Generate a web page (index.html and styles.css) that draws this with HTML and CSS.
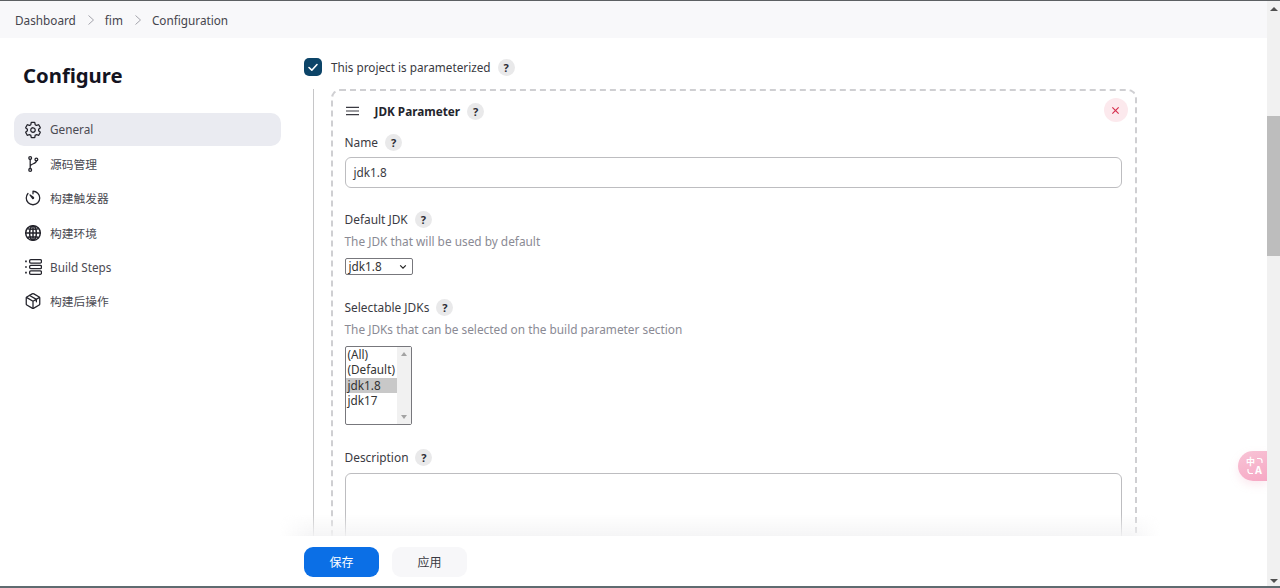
FILE: index.html
```html
<!DOCTYPE html>
<html lang="en">
<head>
<meta charset="utf-8">
<title>fim Config</title>
<link rel="stylesheet" href="styles.css">
</head>
<body>
<div class="edge-top"></div>
<div class="window">
  <div class="page">
    <nav class="crumbs">
      <span>Dashboard</span>
      <svg class="chev" viewBox="0 0 8 12"><path d="M1.5 1.5 6.5 6l-5 4.500"/></svg>
      <span>fim</span>
      <svg class="chev" viewBox="0 0 8 12"><path d="M1.5 1.5 6.500 6l-5 4.500"/></svg>
      <span>Configuration</span>
    </nav>
    <div class="main">
      <aside class="side">
        <h1 class="title">Configure</h1>
        <ul class="menu">
          <li class="item active">
            <svg class="ico" viewBox="0 0 512 512"><path d="M262.29 192.31a64 64 0 1057.4 57.4 64.13 64.13 0 00-57.4-57.4zM416.39 256a154.34 154.34 0 01-1.53 20.79l45.21 35.46a10.81 10.81 0 012.45 13.75l-42.77 74a10.81 10.81 0 01-13.14 4.59l-44.9-18.08a16.11 16.11 0 00-15.17 1.75A164.48 164.48 0 01325 400.8a15.94 15.94 0 00-8.82 12.14l-6.73 47.89a11.08 11.08 0 01-10.68 9.17h-85.54a11.11 11.11 0 01-10.69-8.87l-6.72-47.82a16.07 16.07 0 00-9-12.22 155.3 155.3 0 01-21.46-12.57 16 16 0 00-15.11-1.71l-44.89 18.07a10.81 10.81 0 01-13.14-4.58l-42.77-74a10.8 10.8 0 012.45-13.75l38.21-30a16.05 16.05 0 006.07-14.08c-.36-4.17-.58-8.33-.58-12.5s.21-8.27.58-12.35a16 16 0 00-6.07-13.94l-38.19-30A10.81 10.81 0 0149.48 186l42.77-74a10.81 10.81 0 0113.14-4.59l44.9 18.08a16.11 16.11 0 0015.17-1.75A164.48 164.48 0 01187 111.2a15.94 15.94 0 008.82-12.14l6.73-47.89A11.08 11.08 0 01213.23 42h85.54a11.11 11.11 0 0110.69 8.87l6.72 47.82a16.07 16.07 0 009 12.22 155.3 155.3 0 0121.46 12.57 16 16 0 0015.11 1.71l44.89-18.07a10.81 10.81 0 0113.14 4.58l42.77 74a10.8 10.8 0 01-2.45 13.75l-38.21 30a16.05 16.05 0 00-6.07 14.08c.33 4.14.55 8.3.55 12.47z"/></svg>
            <span>General</span>
          </li>
          <li class="item">
            <svg class="ico" viewBox="0 0 512 512"><circle cx="176" cy="88" r="40"/><circle cx="176" cy="424" r="40"/><circle cx="352" cy="128" r="40"/><path d="M176 128v256M352 168c0 88-176 72-176 160"/></svg>
            <span>源码管理</span>
          </li>
          <li class="item">
            <svg class="ico" viewBox="0 0 512 512"><path d="M112.91 128A191.85 191.85 0 0064 256c0 106 86 192 192 192s192-86 192-192A192 192 0 00256 64v74.450"/><path d="M268 268a24 24 0 01-28-6l-70-92 94 66a24 24 0 014 32z"/></svg>
            <span>构建触发器</span>
          </li>
          <li class="item">
            <svg class="ico heavy" viewBox="0 0 512 512"><circle cx="256" cy="256" r="208"/><ellipse cx="256" cy="256" rx="96" ry="208"/><path d="M256 48v416M48 256h416M96 128c44 30 276 30 320 0M96 384c44-30 276-30 320 0"/></svg>
            <span>构建环境</span>
          </li>
          <li class="item">
            <svg class="ico" viewBox="0 0 512 512"><rect x="160" y="48" width="336" height="96" rx="32"/><rect x="160" y="208" width="336" height="96" rx="32"/><rect x="160" y="368" width="336" height="96" rx="32"/><path class="dots" d="M32 70h48v48H32zM32 232h48v48H32zM32 392h48v48H32z"/></svg>
            <span>Build Steps</span>
          </li>
          <li class="item">
            <svg class="ico" viewBox="0 0 512 512"><path d="M448 341.370V170.610A32 32 0 00432.110 143l-152-88.460a47.940 47.940 0 00-48.240 0L79.890 143A32 32 0 0064 170.610v170.760A32 32 0 0079.890 369l152 88.460a48 48 0 0048.240 0l152-88.460A32 32 0 00448 341.370z"/><path d="M69 154l187 110 187-110M256 464V264M160 98l192 112v70"/></svg>
            <span>构建后操作</span>
          </li>
        </ul>
      </aside>
      <section class="content">
        <div class="check-row">
          <span class="checkbox"><svg viewBox="0 0 18 18"><path d="M5 9.500l2.800 2.700L13 6.500"/></svg></span>
          <span class="text">This project is parameterized</span>
          <span class="help">?</span>
        </div>
        <div class="tree">
          <div class="card">
            <div class="card-head">
              <svg class="handle" viewBox="0 0 14 10"><path d="M0 1h14M0 5h14M0 9h14"/></svg>
              <strong class="card-title">JDK Parameter</strong>
              <span class="help">?</span>
              <span class="close"><svg viewBox="0 0 10 10"><path d="M1.500 1.500l7 7M8.500 1.500l-7 7"/></svg></span>
            </div>
            <div class="field name-field">
              <div class="label"><span>Name</span><span class="help">?</span></div>
              <div class="input">jdk1.8</div>
            </div>
            <div class="field">
              <div class="label"><span>Default JDK</span><span class="help">?</span></div>
              <div class="desc">The JDK that will be used by default</div>
              <div class="select"><span>jdk1.8</span><svg viewBox="0 0 10 6"><path d="M1.500 1l3.500 3.500L8.500 1"/></svg></div>
            </div>
            <div class="field wide">
              <div class="label"><span>Selectable JDKs</span><span class="help">?</span></div>
              <div class="desc">The JDKs that can be selected on the build parameter section</div>
              <div class="listbox">
                <div class="options">
                  <div class="opt">(All)</div>
                  <div class="opt">(Default)</div>
                  <div class="opt selected">jdk1.8</div>
                  <div class="opt">jdk17</div>
                </div>
                <div class="list-bar"><i class="tri up"></i><i class="tri down"></i></div>
              </div>
            </div>
            <div class="field wide">
              <div class="label"><span>Description</span><span class="help">?</span></div>
              <div class="textarea"></div>
            </div>
          </div>
        </div>
      </section>
    </div>
    <div class="footer">
      <button class="btn primary">保存</button>
      <button class="btn plain">应用</button>
    </div>
    <div class="translate">
      <span class="zh">中</span><span class="en">A</span>
      <svg viewBox="0 0 20 20"><path d="M12 2.500h2.500a2.500 2.500 0 012.500 2.500v2M8 17.500H5.500A2.500 2.500 0 013 15v-2"/></svg>
    </div>
  </div>
  <div class="scrollbar">
    <i class="tri up"></i>
    <div class="thumb"></div>
    <i class="tri down"></i>
  </div>
</div>
<div class="edge-bottom"></div>
</body>
</html>
```
FILE: styles.css
```css
* { box-sizing: border-box; }
html, body { margin: 0; height: 588px; overflow: hidden; }
body {
  display: flex;
  flex-direction: column;
  background: #fff;
  color: #3a3a42;
  font-family: "Noto Sans", "Noto Sans CJK SC", sans-serif;
  font-size: 11.750px;
}
.edge-top { height: 1px; background: #5d6063; flex: none; }
.edge-bottom { height: 2px; background: #5f6b70; flex: none; }
.window { flex: 1; display: flex; min-height: 0; }
.page { flex: 1; position: relative; overflow: hidden; min-width: 0; }

.crumbs {
  height: 37px;
  background: #f8f8fa;
  display: flex;
  align-items: center;
  padding: 1px 0 0 15px;
  color: #45454d;
}
.chev { width: 8px; height: 12px; margin: 0 10px 0 11px; fill: none; stroke: #a4a4ac; stroke-width: 1; }

.main { display: flex; }
.side { width: 304px; flex: none; padding-left: 14px; }
.title {
  margin: 23px 0 24px 9px;
  font-size: 20.300px;
  line-height: 28px;
  font-weight: 700;
  color: #14141f;
}
.menu { list-style: none; margin: 0; padding: 0; width: 267px; display: flex; flex-direction: column; gap: 1.400px; }
.item { height: 33px; border-radius: 10px; display: flex; align-items: center; padding-left: 10px; gap: 8px; color: #4a4a52; }
.item span { position: relative; top: -.5px; }
.item.active { background: #eaebf1; }
.ico { width: 18px; height: 18px; flex: none; fill: none; stroke: #24242c; stroke-width: 36; stroke-linecap: round; stroke-linejoin: round; }
.ico.heavy { stroke-width: 42; }
.ico .dots { fill: #24242c; stroke-width: 0; }

.content { flex: 1; min-width: 0; padding-top: 20px; }
.check-row { display: flex; align-items: center; height: 18px; }
.checkbox { width: 18px; height: 18px; border-radius: 5px; background: #0c4468; flex: none; margin-right: 9px; }
.checkbox svg { display: block; fill: none; stroke: #fff; stroke-width: 1.600; stroke-linecap: round; stroke-linejoin: round; }
.help {
  width: 17px; height: 17px; border-radius: 50%;
  background: #e9e9ea; color: #2c2c34;
  font-size: 11px; font-weight: 700; line-height: 17px; text-align: center;
  margin-left: 7px; flex: none;
}

.tree { margin: 13px 0 0 9px; border-left: 1.500px solid #c6c6c8; padding-left: 16.500px; height: 470px; }
.card {
  width: 806px; height: 600px;
  border: 2px dashed #cfcfd2;
  border-radius: 9px;
  padding: 8px 13px 0 12px;
  margin-top: 1px;
}
.card-head { display: flex; align-items: center; height: 24px; }
.handle { width: 13px; height: 10px; margin: 0 16px 0 1px; fill: none; stroke: #3a3a42; stroke-width: 1.300; flex: none; }
.card-title { color: #24242c; font-weight: 700; }
.close {
  width: 24px; height: 24px; border-radius: 50%;
  background: #fce9ed;
  margin-left: auto; margin-right: -6px;
  margin-top: -2px;
  display: flex; align-items: center; justify-content: center;
}
.close svg { width: 9px; height: 9px; fill: none; stroke: #d6304f; stroke-width: 1.300; }

.field { margin-top: 22px; }
.field.wide { margin-top: 23px; }
.name-field { margin-top: 10px; }
.label { height: 18px; display: flex; align-items: center; font-size: 11.900px; }
.input {
  height: 31px; margin-top: 6px;
  border: 1.500px solid #bdbdc0; border-radius: 6px;
  padding-left: 8px; line-height: 29px; color: #3a3a42;
}
.desc { margin-top: 4px; height: 18px; line-height: 18px; color: #8a8a94; font-size: 11.850px; }
.select {
  margin-top: 8px; width: 68px; height: 17px;
  border: 1px solid #77777c; border-radius: 2px;
  display: flex; align-items: center; justify-content: space-between;
  padding: 0 5px 0 3px; line-height: 15px; color: #333;
}
.select svg { width: 8px; height: 6px; fill: none; stroke: #222; stroke-width: 1.500; }
.listbox {
  margin-top: 8px; width: 67px; height: 79px;
  border: 1px solid #77777c; border-radius: 2px;
  display: flex; color: #333;
}
.options { width: 51px; }
.opt { height: 15.400px; line-height: 15.400px; padding-left: 2px; white-space: nowrap; }
.opt.selected { background: #c8c8c8; }
.list-bar { flex: 1; background: #f1f1f1; display: flex; flex-direction: column; justify-content: space-between; align-items: center; padding: 5px 0; }
.tri { display: block; width: 0; height: 0; border-left: 4px solid transparent; border-right: 4px solid transparent; }
.tri.up { border-bottom: 4px solid #505050; }
.tri.down { border-top: 4px solid #505050; }
.list-bar .tri { border-left-width: 3px; border-right-width: 3px; border-bottom-color: #a3a3a3; border-top-color: #a3a3a3; }
.textarea {
  margin-top: 7px; height: 200px;
  border: 1.500px solid #bdbdc0; border-radius: 6px;
}

.footer {
  position: absolute; left: 0; right: 0; bottom: 0;
  height: 50px;
  background: #fff;
  padding: 11px 0 0 304px;
  display: flex; gap: 13px; align-items: flex-start;
}
.footer::before {
  content: "";
  position: absolute; left: 280px; width: 880px; top: -22px; height: 22px;
  background: linear-gradient(to bottom, rgba(244,244,245,0), rgba(244,244,245,.9));
  -webkit-mask-image: linear-gradient(to right, transparent, #000 30px, #000 850px, transparent);
  mask-image: linear-gradient(to right, transparent, #000 30px, #000 850px, transparent);
}
.btn {
  width: 75px; height: 30px; border: 0; border-radius: 9px;
  font-family: inherit; font-size: 12px; padding: 0;
}
.primary { background: #0b6fe6; color: #fff; }
.plain { background: #f7f7f9; color: #3a3a42; }

.translate {
  position: absolute; right: 0; top: 450px;
  width: 29px; height: 30px;
  border-radius: 15px 0 0 15px;
  background: linear-gradient(160deg, #f8c4d6, #f6a8c4);
  box-shadow: 0 4px 8px rgba(240,170,195,.25);
  color: #fff; font-weight: 700;
}
.translate .zh { position: absolute; left: 8px; top: 7px; font-size: 9px; line-height: 8px; }
.translate .en { position: absolute; left: 17px; top: 15px; font-size: 10px; line-height: 8px; }
.translate svg { position: absolute; left: 7px; top: 5px; width: 20px; height: 20px; fill: none; stroke: #fff; stroke-width: 1.200; }

.scrollbar {
  width: 13px; flex: none;
  background: #f1f1f1;
  display: flex; flex-direction: column; align-items: center;
  padding: 6px 0 3px;
}
.thumb { width: 13px; height: 140px; background: #bdbdbd; margin-top: 105px; margin-bottom: auto; }
```
